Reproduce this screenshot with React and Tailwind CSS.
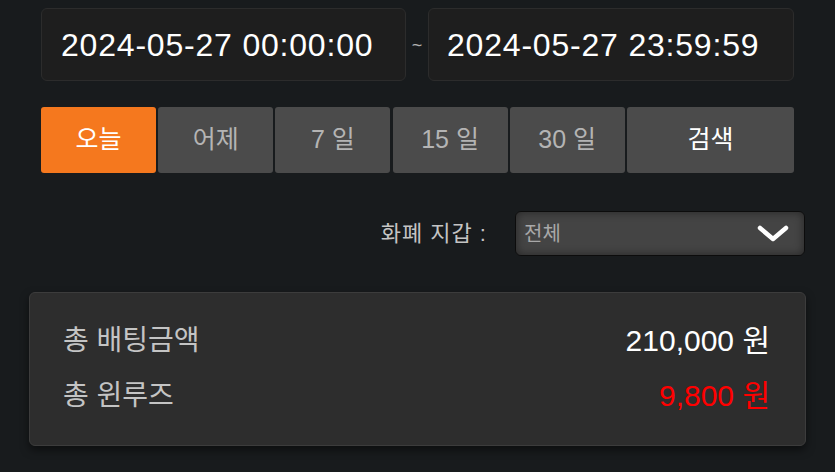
import React from 'react';

const ranges = ['오늘', '어제', '7 일', '15 일', '30 일'];

const App = () => {
    const active = 0;

    return (
        <div className="min-h-screen bg-[#181b1d] pt-2 px-[29px] font-['Liberation_Sans','Noto_Sans_CJK_KR',sans-serif]">
            {/* date range */}
            <div className="mx-3 flex items-center">
                <div className="w-[365px] h-[73px] flex items-center pl-[19px] rounded-md border border-[#2c2c2c] bg-[#1e1e1e] text-white text-[32px] tracking-[0.8px]">
                    2024-05-27 00:00:00
                </div>
                <span className="w-[22px] text-center text-[#b0b0b0] text-lg">~</span>
                <div className="flex-1 h-[73px] flex items-center pl-[18px] rounded-md border border-[#2c2c2c] bg-[#1e1e1e] text-white text-[32px] tracking-[0.8px]">
                    2024-05-27 23:59:59
                </div>
            </div>

            {/* quick range buttons */}
            <div className="mx-3 mt-[26px] flex gap-[2.2px] h-[66px]">
                {ranges.map((label, index) => (
                    <button
                        key={index}
                        className={
                            index === active
                                ? 'w-[115px] rounded-[3px] bg-[#f5781e] text-white text-[25px]'
                                : 'w-[115px] rounded-[3px] bg-[#4b4b4b] text-[#b4b4b4] text-[25px]'
                        }
                    >
                        {label}
                    </button>
                ))}
                <button className="flex-1 rounded-[3px] bg-[#4b4b4b] text-white text-[25px]">검색</button>
            </div>

            {/* currency wallet */}
            <div className="mt-[38px] flex items-center justify-end gap-7 pr-px">
                <span className="text-[22px] text-[#c4c4c4] tracking-[1px]">화폐 지갑 :</span>
                <div className="w-[290px] h-[45px] flex items-center justify-between pl-2 pr-[15px] rounded-md border-[1.5px] border-[#0c0c0c] bg-[#444444] shadow-[inset_0_0_10px_rgba(0,0,0,0.45)]">
                    <span className="text-[20px] text-[#a8a8a8]">전체</span>
                    <svg width="32" height="17" viewBox="0 0 32 17">
                        <polyline
                            points="3,3 16,14 29,3"
                            fill="none"
                            stroke="#ffffff"
                            strokeWidth="4.5"
                            strokeLinecap="round"
                            strokeLinejoin="round"
                        />
                    </svg>
                </div>
            </div>

            {/* totals */}
            <div className="mt-9 rounded-md border border-[#3c3c3c] bg-[#2d2d2d] pl-[33px] pr-[35px] pt-5 pb-[22px] shadow-[0_4px_8px_rgba(0,0,0,0.5)]">
                <div className="h-[55px] flex items-center justify-between">
                    <span className="text-[28px] text-[#c4c4c4]">총 배팅금액</span>
                    <span className="text-[30px] text-white">210,000 원</span>
                </div>
                <div className="h-[55px] flex items-center justify-between">
                    <span className="text-[28px] text-[#c4c4c4]">총 윈루즈</span>
                    <span className="text-[30px] text-[#ff0000]">9,800 원</span>
                </div>
            </div>
        </div>
    );
};

export default App;
